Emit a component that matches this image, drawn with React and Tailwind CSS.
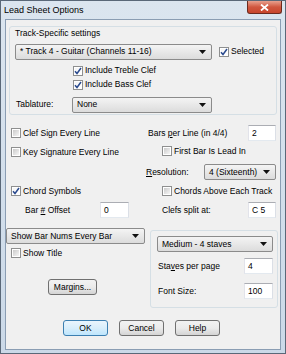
import clsx from 'clsx';

function Check({ checked }) {
  return (
    <span className="flex h-[10px] w-[10px] shrink-0 items-center justify-center border border-[#8e8f8f] bg-white p-[1px]">
      <span
        className={clsx(
          'flex h-full w-full items-center justify-center',
          checked ? 'bg-gradient-to-br from-[#f4f4f4] to-[#ffffff]' : 'bg-gradient-to-br from-[#cbcbcb] to-[#f6f6f6]'
        )}
      >
        {checked && (
          <svg width="8" height="8" viewBox="0 0 8 8" className="-m-[1px]">
            <path d="M1 4.2 L3 6.5 L7 1" fill="none" stroke="#2a4a8e" strokeWidth="1.5" />
          </svg>
        )}
      </span>
    </span>
  );
}

function CheckRow({ checked, children, className }) {
  return (
    <div className={clsx('flex h-[10px] items-center gap-[2px]', className)}>
      <Check checked={checked} />
      <span className="whitespace-nowrap">{children}</span>
    </div>
  );
}

function Combo({ children, className }) {
  return (
    <div
      className={clsx(
        'flex h-[16px] items-center justify-between rounded-[2px] border border-[#8b8b8b] bg-gradient-to-b from-[#f4f4f4] to-[#dcdcdc] pl-[4px] pr-[5px]',
        className
      )}
    >
      <span className="whitespace-nowrap">{children}</span>
      <svg width="7" height="4" viewBox="0 0 7 4">
        <path d="M0 0 H7 L3.5 4 Z" fill="#111" />
      </svg>
    </div>
  );
}

function Field({ value, className }) {
  return (
    <div
      className={clsx(
        'flex h-[16px] items-center border border-[#abadb3] border-l-[#e2e3ea] border-b-[#e3e9ef] border-r-[#dbdfe6] bg-white pl-[3px]',
        className
      )}
    >
      {value}
    </div>
  );
}

function Button({ children, primary, className }) {
  return (
    <div
      className={clsx(
        'flex h-[16px] items-center justify-center rounded-[3px] border bg-gradient-to-b',
        primary
          ? 'border-[#3c7fb1] from-[#eaf5fd] via-[#d9eefb] to-[#bee6fd]'
          : 'border-[#707070] from-[#f2f2f2] via-[#ebebeb] to-[#d4d4d4]',
        className
      )}
    >
      {children}
    </div>
  );
}

export default function App() {
  return (
    <div
      className="flex h-[354px] w-[286px] flex-col border border-[#5a6878] bg-gradient-to-b from-[#dbe5ef] to-[#cbd9e8] text-[8.5px] leading-none text-black"
      style={{ fontFamily: '"Liberation Sans", Arial, sans-serif' }}
    >
      {/* title bar */}
      <div className="flex h-[18px] shrink-0 items-start justify-between">
        <span className="mt-[5px] pl-[3px] text-[9px]">Lead Sheet Options</span>
        <div className="mr-[3px] flex h-[13px] w-[35px] items-center justify-center rounded-b-[3px] border border-t-0 border-[#6b2a1f] bg-gradient-to-b from-[#e8a08e] via-[#d0573f] to-[#c8452c]">
          <svg width="9" height="7" viewBox="0 0 9 7">
            <path d="M1 0.5 L8 6.5 M8 0.5 L1 6.5" stroke="#fff" strokeWidth="1.8" />
          </svg>
        </div>
      </div>

      {/* client area */}
      <div className="mx-[4px] mb-[3px] flex flex-1 flex-col border border-[#8a9db3] bg-[#f0f0f0]">
        {/* Track-specific settings */}
        <div className="ml-[3px] mt-[6px] flex h-[89px] w-[268px] flex-col rounded-[3px] border border-[#d5dfe5]">
          <div className="mt-[2px] pl-[5px]">Track-Specific settings</div>
          <div className="mt-[6px] flex items-center pl-[5px]">
            <Combo className="w-[197px]">* Track 4 - Guitar (Channels 11-16)</Combo>
            <CheckRow checked className="ml-[7px]">Selected</CheckRow>
          </div>
          <CheckRow checked className="ml-[63px] mt-[6px]">Include Treble Clef</CheckRow>
          <CheckRow checked className="ml-[63px] mt-[4px]">Include Bass Clef</CheckRow>
          <div className="mt-[7px] flex items-center pl-[6px]">
            <span className="w-[56px]">Tablature:</span>
            <Combo className="w-[140px]">None</Combo>
          </div>
        </div>

        {/* two columns */}
        <div className="flex h-[193px]">
          <div className="flex w-[140px] flex-col">
            <CheckRow className="ml-[5px] mt-[13px]">Clef Sign Every Line</CheckRow>
            <CheckRow className="ml-[5px] mt-[9px]">Key Signature Every Line</CheckRow>
            <CheckRow checked className="ml-[5px] mt-[29px]">Chord Symbols</CheckRow>
            <div className="mt-[6px] flex items-center pl-[19px]">
              <span className="w-[75px]">
                Bar <u>#</u> Offset
              </span>
              <Field value="0" className="w-[29px]" />
            </div>
            <Combo className="mt-[10px] w-[139px]">Show Bar Nums Every Bar</Combo>
            <CheckRow className="ml-[5px] mt-[4px]">Show Title</CheckRow>
            <Button className="ml-[42px] mt-[21px] w-[49px]">Margins...</Button>
          </div>

          <div className="flex flex-1 flex-col">
            <div className="mt-[10px] flex items-center">
              <span className="w-[102px] pl-[2px]">
                Bars <u>p</u>er Line (in 4/4)
              </span>
              <Field value="2" className="w-[28px]" />
            </div>
            <CheckRow className="ml-[16px] mt-[5px]">First Bar Is Lead In</CheckRow>
            <div className="mt-[8px] flex items-center">
              <span className="w-[58px]">
                <u>R</u>esolution:
              </span>
              <Combo className="w-[72px]">4 (Sixteenth)</Combo>
            </div>
            <CheckRow className="ml-[16px] mt-[6px]">Chords Above Each Track</CheckRow>
            <div className="mt-[6px] flex items-center pl-[16px]">
              <span className="w-[86px]">Clefs split at:</span>
              <Field value="C 5" className="w-[28px]" />
            </div>
            <div className="ml-[4px] mt-[12px] flex h-[78px] w-[128px] flex-col rounded-[3px] border border-[#d5dfe5]">
              <Combo className="ml-[6px] mt-[5px] w-[116px]">Medium - 4 staves</Combo>
              <div className="mt-[6px] flex items-center pl-[7px]">
                <span className="w-[86px]">
                  Sta<u>v</u>es per page
                </span>
                <Field value="4" className="w-[29px]" />
              </div>
              <div className="mt-[9px] flex items-center pl-[7px]">
                <span className="w-[86px]">Font Size:</span>
                <Field value="100" className="w-[29px]" />
              </div>
            </div>
          </div>
        </div>

        {/* dialog buttons */}
        <div className="ml-[57px] mt-[12px] flex gap-[11px]">
          <Button primary className="w-[45px]">OK</Button>
          <Button className="w-[45px]">Cancel</Button>
          <Button className="w-[45px]">Help</Button>
        </div>
      </div>
    </div>
  );
}
